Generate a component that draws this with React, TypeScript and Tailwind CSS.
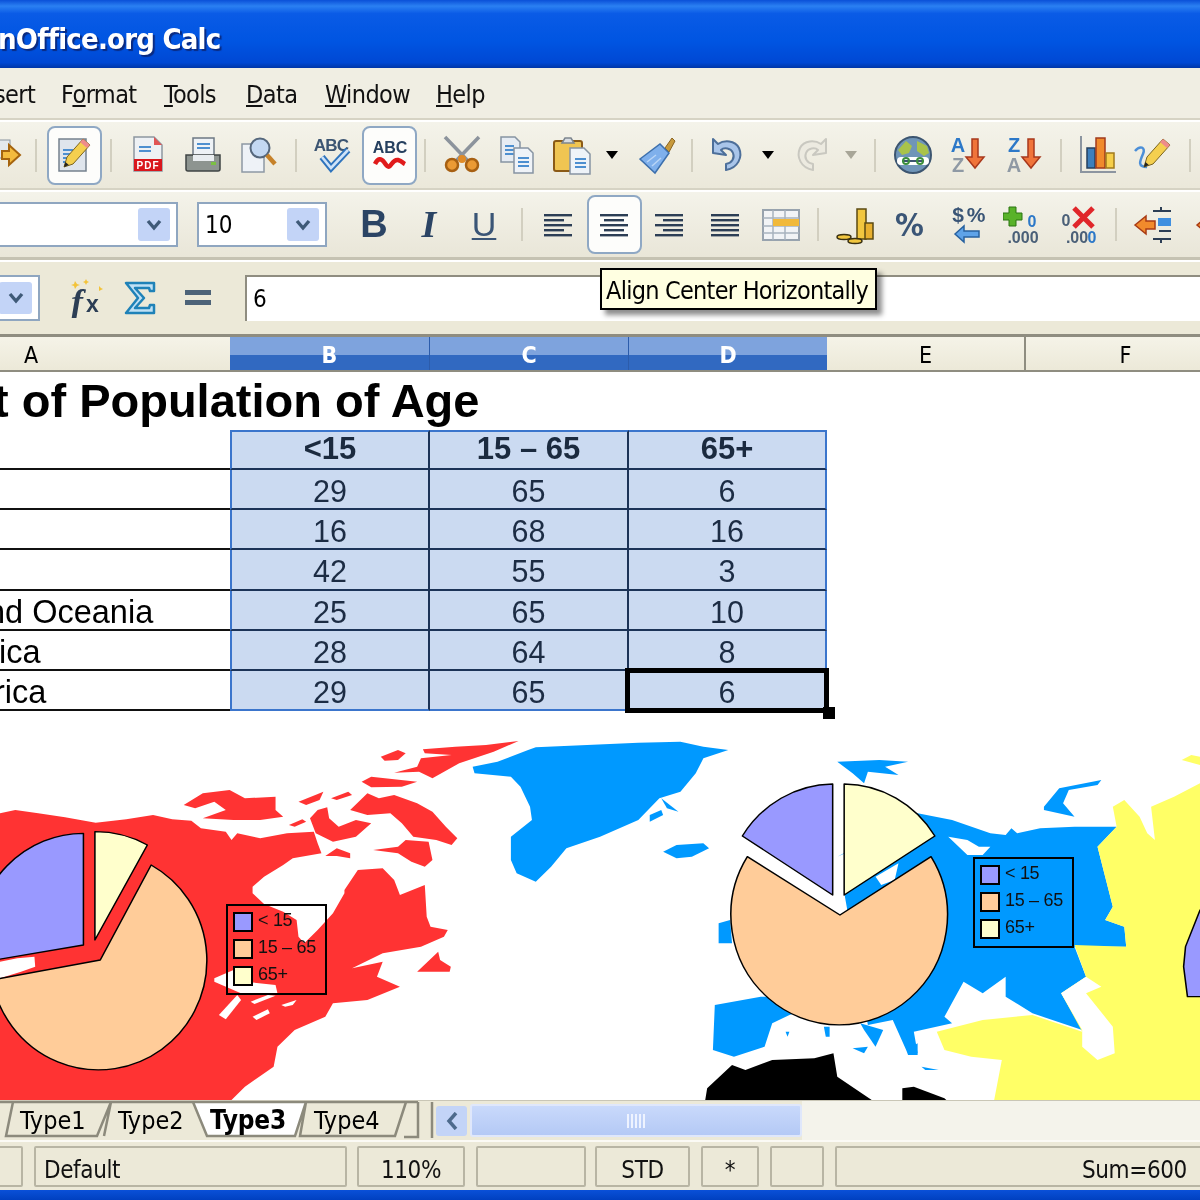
import type { ReactNode } from 'react'

const rows = [
  { label: '', b: '29', c: '65', d: '6' },
  { label: '', b: '16', c: '68', d: '16' },
  { label: '', b: '42', c: '55', d: '3' },
  { label: 'nd Oceania', b: '25', c: '65', d: '10', off: '-ml-[13px]' },
  { label: 'ica', b: '28', c: '64', d: '8', off: '-ml-[1px]' },
  { label: 'rica', b: '29', c: '65', d: '6', off: '-ml-[6px]' },
]

function Ico({ children }: { children: ReactNode }) {
  return (
    <svg viewBox="0 0 40 40" className="h-10 w-10 flex-none">
      {children}
    </svg>
  )
}

function Tool({ children, className = '' }: { children: ReactNode; className?: string }) {
  return <div className={`flex h-10 w-[55px] flex-none items-center justify-center ${className}`}>{children}</div>
}

function Active({ children, className = '' }: { children: ReactNode; className?: string }) {
  return (
    <div className={`flex h-[59px] w-[55px] flex-none items-center justify-center rounded-lg border-2 border-[#8fa8c4] bg-[#fdfdfb] ${className}`}>
      {children}
    </div>
  )
}

function Sep({ className = '' }: { className?: string }) {
  return <div className={`h-[33px] w-[2px] flex-none bg-[#d2cfc0] ${className}`} />
}

function Drop({ gray = false, className = '' }: { gray?: boolean; className?: string }) {
  return (
    <div className={`flex h-10 w-[26px] flex-none items-center justify-center ${className}`}>
      <svg viewBox="0 0 14 8" className="h-2 w-[14px]">
        <path d="M1 0h12L7 8z" fill={gray ? '#a8a698' : '#000'} />
      </svg>
    </div>
  )
}

function Chevron({ className }: { className: string }) {
  return (
    <div className={`flex flex-none items-center justify-center rounded-[3px] bg-[#c3d4f7] ${className}`}>
      <svg viewBox="0 0 16 12" className="h-3 w-4">
        <path d="M2 2l6 7 6-7" fill="none" stroke="#3f5a78" strokeWidth="3.4" />
      </svg>
    </div>
  )
}

function DocLines({ x, y, w, n = 3 }: { x: number; y: number; w: number; n?: number }) {
  return (
    <>
      {Array.from({ length: n }).map((_, i) => (
        <rect key={i} x={x} y={y + i * 4} width={w} height="2" fill="#4d8fd0" />
      ))}
    </>
  )
}

function AlignIcon({ kind }: { kind: 'left' | 'center' | 'right' | 'full' }) {
  const long = [0, 2, 4]
  const lines = [0, 1, 2, 3, 4].map(i => {
    const isLong = long.includes(i) || kind === 'full'
    const w = isLong ? 28 : 20
    const x = kind === 'left' ? 6 : kind === 'right' ? 34 - w : 20 - w / 2
    return <rect key={i} x={x} y={9 + i * 5} width={w} height="2.4" fill="#2c3e55" />
  })
  return <Ico>{lines}</Ico>
}

function Pencil({ tx = 0, ty = 0 }: { tx?: number; ty?: number }) {
  return (
    <g transform={`translate(${tx} ${ty})`}>
      <path d="M28 4l7 6-17 19-9 3 3-10z" fill="#f4cf4f" stroke="#7a6420" strokeWidth="1" />
      <path d="M28 4l7 6-3 3-7-6z" fill="#ee8b8b" />
      <path d="M9 32l1.4-5 3.4 3z" fill="#222" />
    </g>
  )
}

function Legend({ className }: { className: string }) {
  const items = [
    { t: '< 15', bg: 'bg-[#9999ff]' },
    { t: '15 – 65', bg: 'bg-[#ffcc99]' },
    { t: '65+', bg: 'bg-[#ffffcc]' },
  ]
  return (
    <div className={`absolute flex h-[91px] w-[101px] flex-col justify-center gap-[7px] border-2 border-black pl-[5px] ${className}`}>
      {items.map(it => (
        <div key={it.t} className="flex h-[20px] items-center gap-[5px] font-['Liberation_Sans',sans-serif] text-[18px] tracking-[-0.3px] text-[#111]">
          <span className={`h-[20px] w-[20px] flex-none border-2 border-black ${it.bg}`} />
          <span className="-mt-1 whitespace-nowrap">{it.t}</span>
        </div>
      ))}
    </div>
  )
}

function MapArt() {
  const red = '#ff3333'
  const blue = '#0099ff'
  const yellow = '#ffff66'
  const ink = { stroke: '#000', strokeWidth: 4, strokeLinejoin: 'round' as const }
  return (
    <svg viewBox="0 740 1200 360" className="block h-[360px] w-[1200px]">
      <g transform="translate(0 730) scale(0.3827 0.3333)">
        <polygon fill={red} points="0,250 40,240 100,250 170,262 250,278 330,268 400,255 450,268 500,272 525,295 590,305 605,330 620,310 680,325 750,310 820,305 830,340 840,370 765,385 740,405 690,440 660,470 660,490 690,522 740,545 775,570 780,620 795,640 830,600 870,550 900,490 900,480 935,420 1000,415 1030,450 1045,495 1110,465 1115,560 1125,590 1170,600 1160,620 1100,650 1000,670 920,715 1000,695 985,740 1045,770 960,810 870,820 850,860 770,900 725,950 715,1010 640,1070 605,1110 0,1110" />
        <polygon fill={red} points="480,225 530,190 600,180 640,205 720,200 720,240 740,260 680,270 610,270 530,265 590,240 560,215 510,235" />
        <polygon fill={red} points="780,215 845,185 835,210 800,225" />
        <polygon fill={red} points="865,205 910,185 920,195 880,210" />
        <polygon fill={red} points="755,285 790,268 800,275 770,290" />
        <polygon fill={red} points="915,240 960,190 990,205 1030,195 1090,220 1130,245 1165,290 1195,325 1180,345 1140,330 1080,320 1050,280 1020,250 960,255" />
        <polygon fill={red} points="975,360 1040,350 1060,330 1120,335 1130,390 1110,410 1075,395 1040,370" />
        <polygon fill={red} points="850,378 880,355 915,370 915,385 880,378" />
        <polygon fill={red} points="1105,58 1190,50 1270,45 1355,33 1290,65 1200,100 1130,145 1095,125 1030,128 1090,110 1100,85 1180,75 1110,70" />
        <polygon fill={red} points="995,80 1040,60 1060,70 1040,90 1005,92" />
        <polygon fill={red} points="945,155 970,140 1090,155 1050,170 970,172" />
        <polygon fill={red} points="830,240 855,232 860,265 885,290 930,270 970,280 930,320 870,335 825,310 810,265" />
        <polygon fill={red} points="1090,725 1145,665 1150,690 1178,710 1175,725" />
        <polygon fill="#fff" points="560,745 610,720 640,755 720,765 725,790 640,795 560,755" />
        <polygon fill="#fff" points="572,855 620,795 630,810 590,868" />
        <polygon fill="#fff" points="660,860 700,838 705,850 670,870" />
        <polygon fill="#fff" points="655,815 700,795 720,797 665,822" />
        <polygon fill="#fff" points="735,825 775,810 765,825 745,830" />
        <polygon fill={blue} points="1235,110 1300,95 1380,60 1400,52 1668,38 1778,35 1838,50 1903,60 1838,85 1818,130 1778,185 1723,205 1668,270 1568,320 1480,355 1440,410 1400,455 1350,430 1335,390 1335,320 1390,270 1385,230 1360,170 1335,140 1240,130" />
        <polygon fill="#fff" points="0,695 45,685 90,680 92,710 55,725 0,745" />
        <path d="M262,690 L395,405 A283 328 0 1 1 -21,750 Z" fill="#ffcc99" {...ink} />
        <path d="M218,645 L218,310 A283 335 0 0 0 -65,645 L-40,695 Z" fill="#9999ff" {...ink} />
        <path d="M248,630 L248,305 A283 325 0 0 1 385,345 Z" fill="#ffffcc" {...ink} />
      </g>
      <g transform="translate(600 730) scale(0.3827 0.3333)">
        <polygon fill={blue} points="620,95 730,90 805,95 745,110 780,135 700,125 690,160 660,130" />
        <polygon fill={blue} points="165,365 200,345 270,340 285,355 240,380 200,385" />
        <polygon fill={blue} points="130,255 160,240 165,255 130,275" />
        <polygon fill={blue} points="160,205 205,245 175,235" />
        <polygon fill={blue} points="1160,230 1200,175 1310,150 1300,165 1225,180 1210,220 1240,260 1160,240" />
        <polygon fill={blue} points="620,380 830,250 920,270 1020,310 1060,315 1075,295 1090,310 1150,295 1240,290 1350,290 1300,350 1320,440 1340,530 1320,570 1370,590 1375,650 1240,650 1270,740 1205,790 1260,900 1130,850 1060,800 1060,740 1000,790 950,755 900,860 920,880 820,905 830,970 800,960 765,870 700,885 640,500 640,370" />
        <polygon fill={blue} points="420,800 300,825 295,960 350,980 430,950 450,880 495,855 640,800" />
        <polygon fill={blue} points="310,580 340,570 345,640 310,640" />
        <polygon fill="#fff" points="910,320 960,330 990,350 1020,350 1000,375 960,375" />
        <polygon fill="#fff" points="720,440 780,400 770,450 735,465" />
        <polygon fill="#fff" points="590,500 640,500 640,550 600,530" />
        <polygon fill={blue} points="680,880 740,900 720,950 690,900" />
        <polygon fill={blue} points="585,890 600,890 600,920 590,920" />
        <polygon fill={blue} points="660,955 700,950 690,970" />
        <polygon fill={blue} points="485,905 495,905 490,920" />
        <polygon fill={blue} points="840,1010 885,1020 850,1020" />
        <polygon fill={blue} points="800,960 830,940 830,975 805,975" />
        <polygon fill={yellow} points="1340,230 1370,210 1410,260 1430,310 1450,330 1440,230 1500,200 1568,160 1568,1110 1030,1110 1050,990 970,980 900,960 880,905 1000,870 1130,855 1260,905 1205,790 1270,740 1240,645 1375,650 1370,590 1320,570 1340,530 1300,350 1350,290" />
        <polygon fill={yellow} points="1520,90 1545,75 1568,80 1568,105" />
        <polygon fill="#fff" points="1270,740 1310,770 1270,790 1340,890 1345,970 1300,990 1260,950 1260,900 1205,790" />
        <polygon fill="#fff" points="990,1020 1020,1005 1010,1025" />
        <polygon fill="#000" points="275,1110 280,1075 345,1005 380,1020 450,990 560,985 610,970 620,1040 710,1110" />
        <polygon fill="#000" points="790,1075 820,1070 900,1105 905,1110 790,1110" />
        <path d="M627,555 L385,380 A283 330 0 1 0 865,380 Z" fill="#ffcc99" {...ink} />
        <path d="M608,495 L372,318 A283 333 0 0 1 608,162 Z" fill="#9999ff" {...ink} />
        <path d="M638,495 L638,162 A283 333 0 0 1 875,318 Z" fill="#ffffcc" {...ink} />
        <path d="M1568,540 L1530,650 L1525,710 L1535,800 L1600,800 L1600,540 Z" fill="#9999ff" {...ink} />
      </g>
    </svg>
  )
}

function TabStrip() {
  const line = { stroke: '#8c8a7c', strokeWidth: 2.5, fill: 'none' }
  return (
    <div className="relative flex h-[40px] w-[436px] flex-none items-center">
      <svg viewBox="0 0 436 40" className="absolute inset-0 h-[40px] w-[436px]">
        <path d="M193 1h113l-11 34h-88z" fill="#fff" />
        <path d="M0 1h418" {...line} />
        <path d="M13 1L6 35h91l14-34M111 1L104 35M193 1l14 34h88l11-34M306 1L300 35h95l11-34M418 1v35h-14M432 1v36" {...line} />
      </svg>
      <span className="relative ml-[20px] w-[98px] flex-none">Type1</span>
      <span className="relative w-[92px] flex-none">Type2</span>
      <span className="relative w-[104px] flex-none text-[26px] font-bold tracking-[-0.2px]">Type3</span>
      <span className="relative flex-none">Type4</span>
    </div>
  )
}

function StatusCell({ className, children }: { className: string; children?: ReactNode }) {
  return (
    <div className={`flex h-[41px] flex-none items-center rounded-[2px] border-2 border-[#b8b5a4] bg-[#ece9d8] pt-[8px] ${className}`}>
      {children}
    </div>
  )
}

export default function App() {
  return (
    <div className="relative flex h-[1200px] w-[1200px] flex-col overflow-hidden bg-white font-['DejaVu_Sans_Condensed','DejaVu_Sans',sans-serif] text-black blur-[0.5px]">
      {/* title bar */}
      <div className="flex h-[68px] flex-none items-end bg-[linear-gradient(#0a50d8_0%,#2b80f2_9%,#0a5be6_20%,#0055e2_60%,#0048d4_92%,#0036a8_100%)] pb-[10px]">
        <span className="-ml-[2px] whitespace-nowrap text-[29px] leading-[38px] font-bold tracking-[-0.8px] text-white [text-shadow:2px_2px_1px_#0a2a80]">nOffice.org Calc</span>
      </div>

      {/* menu */}
      <div className="flex h-[52px] flex-none items-center border-b-2 border-[#d6d3c4] bg-[#f0eee3] pt-1 text-[25px] tracking-[-0.6px] text-[#111]">
        <span className="-ml-[6px] w-[67px] flex-none">sert</span>
        <span className="w-[103px] flex-none">F<span className="underline">o</span>rmat</span>
        <span className="w-[82px] flex-none"><span className="underline">T</span>ools</span>
        <span className="w-[79px] flex-none"><span className="underline">D</span>ata</span>
        <span className="w-[111px] flex-none"><span className="underline">W</span>indow</span>
        <span className="flex-none"><span className="underline">H</span>elp</span>
      </div>

      {/* standard toolbar */}
      <div className="-ml-[22px] flex h-[70px] w-[1222px] flex-none items-center border-t-2 border-b-2 border-t-white border-b-[#d6d3c4] bg-[linear-gradient(#f4f3ea,#ebe8da)]">
        <Tool>
          <Ico>
            <rect x="12" y="5" width="12" height="18" fill="#e4e8ee" stroke="#8a94a0" />
            <path d="M16 16h7v-6l11 10-11 10v-6h-7z" fill="#f4bb3e" stroke="#a5640f" strokeWidth="2" />
          </Ico>
        </Tool>
        <Sep className="ml-[2px]" />
        <Active className="ml-[10px]">
          <Ico>
            <rect x="4" y="4" width="27" height="32" fill="#dfe5ec" stroke="#75818e" strokeWidth="1.5" />
            <DocLines x={8} y={14} w={10} n={4} />
            <Pencil />
          </Ico>
        </Active>
        <Sep className="ml-[8px]" />
        <Tool className="ml-[8.5px]">
          <Ico>
            <path d="M6 2h20l8 8v26H6z" fill="#eef1f4" stroke="#8d96a0" strokeWidth="1.5" />
            <path d="M26 2l8 8h-8z" fill="#e25555" />
            <DocLines x={11} y={11} w={12} n={2} />
            <rect x="6" y="24" width="28" height="12" fill="#d9161c" />
            <text x="20" y="34" textAnchor="middle" fontSize="10" fontWeight="700" letterSpacing="1" fill="#fff" fontFamily="Liberation Sans">PDF</text>
          </Ico>
        </Tool>
        <Tool>
          <Ico>
            <rect x="10" y="3" width="21" height="23" fill="#eef2f6" stroke="#6d7884" strokeWidth="1.5" />
            <DocLines x={14} y={8} w={13} n={2} />
            <path d="M3 20h34v14a2 2 0 01-2 2H5a2 2 0 01-2-2z" fill="#8d9490" stroke="#3f4444" strokeWidth="1.5" />
            <rect x="10" y="20" width="21" height="6" fill="#e9edf0" />
            <rect x="28" y="27" width="5" height="3" fill="#7bc043" />
          </Ico>
        </Tool>
        <Tool>
          <Ico>
            <rect x="4" y="9" width="22" height="28" fill="#eef2f7" stroke="#8d98a4" strokeWidth="1.5" />
            <circle cx="22" cy="13" r="9.5" fill="#c3d8f2" stroke="#55677c" strokeWidth="2" />
            <path d="M29 20l8 9" stroke="#c6822a" strokeWidth="4.5" />
          </Ico>
        </Tool>
        <Sep className="ml-[9.5px]" />
        <Tool className="ml-[7.5px]">
          <Ico>
            <text x="19" y="16" textAnchor="middle" fontSize="17" fontWeight="700" fill="#3c5572" fontFamily="Liberation Sans" letterSpacing="-0.8">ABC</text>
            <path d="M10 22l9 11 17-18" fill="none" stroke="#2f74bd" strokeWidth="6.5" />
            <path d="M10 22l9 11 17-18" fill="none" stroke="#cfe3f8" strokeWidth="2.6" />
          </Ico>
        </Tool>
        <Active className="ml-[2.5px]">
          <Ico>
            <text x="20" y="18" textAnchor="middle" fontSize="16" fontWeight="700" fill="#26405f" fontFamily="Liberation Sans">ABC</text>
            <path d="M5 29c3-6 6-6 9-2 2 3 4 6 6 4s4-7 8-6 5 3 7 4" fill="none" stroke="#e01b1b" strokeWidth="4.5" />
          </Ico>
        </Active>
        <Sep className="ml-[7px]" />
        <Tool className="ml-[8px]">
          <Ico>
            <path d="M3 2l24 25M37 2L13 27" stroke="#8c939c" strokeWidth="3.5" />
            <circle cx="10" cy="30" r="6" fill="#eb9a34" stroke="#a76012" strokeWidth="2.5" />
            <circle cx="30" cy="30" r="6" fill="#eb9a34" stroke="#a76012" strokeWidth="2.5" />
            <circle cx="20" cy="24" r="4" fill="#e08b27" />
          </Ico>
        </Tool>
        <Tool>
          <Ico>
            <path d="M4 2h14l5 5v20H4z" fill="#e6ecf3" stroke="#8794a2" strokeWidth="1.5" />
            <DocLines x={8} y={10} w={9} n={3} />
            <path d="M17 13h14l5 5v20H17z" fill="#eff3f8" stroke="#8794a2" strokeWidth="1.5" />
            <DocLines x={21} y={22} w={11} n={3} />
          </Ico>
        </Tool>
        <Tool>
          <Ico>
            <rect x="2" y="6" width="28" height="30" rx="2" fill="#f0c552" stroke="#8b5a16" strokeWidth="2" />
            <path d="M10 8l3-5h6l3 5z" fill="#d8dde2" stroke="#7c858e" strokeWidth="1.5" />
            <path d="M18 13h14l6 6v20H18z" fill="#eef3f8" stroke="#8794a2" strokeWidth="1.5" />
            <DocLines x={23} y={23} w={11} n={3} />
          </Ico>
        </Tool>
        <Drop />
        <Tool className="ml-[4px]">
          <Ico>
            <path d="M28 13l7-10 3 3-6 11z" fill="#c89a3c" stroke="#8a6420" />
            <path d="M3 24L23 9l9 9-14 20z" fill="#7fb0ec" stroke="#3d70ad" strokeWidth="1.5" />
            <path d="M10 27l9-7M15 31l9-8" stroke="#b9d5f6" strokeWidth="1.5" />
          </Ico>
        </Tool>
        <Sep className="ml-[7px]" />
        <Tool className="ml-[7px]">
          <Ico>
            <path d="M5 18V4l5 5c6-4 17-4 21 4 4 9-1 20-13 22v-6c6-1 9-6 7-11-2-5-9-6-12-3l5 5z" fill="#a9c5ea" stroke="#4d6f9a" strokeWidth="2" strokeLinejoin="round" />
          </Ico>
        </Tool>
        <Drop />
        <Tool className="ml-[2px]">
          <Ico>
            <path d="M35 18V4l-5 5C24 5 13 5 9 13c-4 9 1 20 13 22v-6c-6-1-9-6-7-11 2-5 9-6 12-3l-5 5z" fill="#eceae0" stroke="#c9c8c0" strokeWidth="2" strokeLinejoin="round" />
          </Ico>
        </Tool>
        <Drop gray />
        <Sep className="ml-[10px]" />
        <Tool className="ml-[9px]">
          <Ico>
            <ellipse cx="20" cy="20" rx="18" ry="18" fill="#6f95b8" stroke="#3c5570" strokeWidth="2" />
            <path d="M5 15l8-9 6 5-3 7-7 2zM24 6l10 5 2 7-5 3-7-5z" fill="#a9c34a" />
            <path d="M8 26h24" stroke="#fff" strokeWidth="8" strokeLinecap="round" />
            <path d="M9 26h22" stroke="#3c5570" strokeWidth="2" />
            <circle cx="13" cy="26" r="3" fill="none" stroke="#3c8f3c" strokeWidth="2" />
            <circle cx="27" cy="26" r="3" fill="none" stroke="#3c8f3c" strokeWidth="2" />
          </Ico>
        </Tool>
        <Tool>
          <Ico>
            <text x="10" y="17" textAnchor="middle" fontSize="20" fontWeight="700" fill="#2c78c8" fontFamily="Liberation Sans">A</text>
            <text x="10" y="37" textAnchor="middle" fontSize="20" fontWeight="700" fill="#8f99a4" fontFamily="Liberation Sans">Z</text>
            <path d="M24 4h6v18h6l-9 11-9-11h6z" fill="#f0743a" stroke="#a8381c" strokeWidth="1.5" />
          </Ico>
        </Tool>
        <Tool className="ml-[1px]">
          <Ico>
            <text x="10" y="17" textAnchor="middle" fontSize="20" fontWeight="700" fill="#2c78c8" fontFamily="Liberation Sans">Z</text>
            <text x="10" y="37" textAnchor="middle" fontSize="20" fontWeight="700" fill="#8f99a4" fontFamily="Liberation Sans">A</text>
            <path d="M24 4h6v18h6l-9 11-9-11h6z" fill="#f0743a" stroke="#a8381c" strokeWidth="1.5" />
          </Ico>
        </Tool>
        <Sep className="ml-[9px]" />
        <Tool className="ml-[8px]">
          <Ico>
            <path d="M3 1v36h35" fill="none" stroke="#8c95a0" strokeWidth="2" />
            <rect x="9" y="13" width="8" height="20" fill="#3d7fbc" stroke="#26405f" strokeWidth="1.5" />
            <rect x="18" y="3" width="9" height="30" fill="#f08a2c" stroke="#a13a1c" strokeWidth="1.5" />
            <rect x="28" y="18" width="8" height="15" fill="#f6cf4a" stroke="#a07a1c" strokeWidth="1.5" />
          </Ico>
        </Tool>
        <Tool>
          <Ico>
            <path d="M2 16c5-6 11-4 8 3s-6 13 4 13" fill="none" stroke="#4c8fd8" strokeWidth="2.5" />
            <Pencil tx={2} ty={0} />
          </Ico>
        </Tool>
        <Sep className="ml-[9px]" />
      </div>

      {/* formatting toolbar */}
      <div className="flex h-[70px] flex-none items-center border-t-2 border-b-[3px] border-t-white border-b-[#c5c2b2] bg-[linear-gradient(#f4f3ea,#e9e6d8)]">
        <div className="-ml-[10px] flex h-[45px] w-[188px] flex-none items-center justify-end border-2 border-[#8fa6c0] bg-white pr-[6px]">
          <Chevron className="h-[33px] w-[32px]" />
        </div>
        <div className="ml-[19px] flex h-[45px] w-[130px] flex-none items-center justify-between border-2 border-[#8fa6c0] bg-white pr-[6px] pl-[6px] text-[24px]">
          <span>10</span>
          <Chevron className="h-[33px] w-[32px]" />
        </div>
        <Tool className="ml-[19.5px] font-['Liberation_Sans',sans-serif] text-[38px] font-bold text-[#2b4464]">B</Tool>
        <Tool className="font-['Liberation_Serif',serif] text-[38px] font-bold italic text-[#2b4464]">I</Tool>
        <Tool className="font-['Liberation_Sans',sans-serif] text-[34px] text-[#3a5576] underline decoration-2 underline-offset-2">U</Tool>
        <Sep className="ml-[9px]" />
        <Tool className="ml-[8px]"><AlignIcon kind="left" /></Tool>
        <Active className="ml-[1px]"><AlignIcon kind="center" /></Active>
        <Tool><AlignIcon kind="right" /></Tool>
        <Tool className="ml-[1px]"><AlignIcon kind="full" /></Tool>
        <Tool className="ml-[1px]">
          <Ico>
            <rect x="2" y="5" width="36" height="30" fill="#f2f4f6" stroke="#98a3ae" strokeWidth="2" />
            <path d="M2 13h36M2 21h36M2 28h36M12 5v30M24 5v30" stroke="#a8b3be" strokeWidth="1.5" />
            <rect x="12" y="14" width="26" height="7" fill="#f1b93a" />
          </Ico>
        </Tool>
        <Sep className="ml-[8px]" />
        <Tool className="ml-[8.5px]">
          <Ico>
            <rect x="22" y="4" width="9" height="30" fill="#f1c63f" stroke="#5b4a12" strokeWidth="1.5" />
            <rect x="30" y="18" width="8" height="16" fill="#e8b02f" stroke="#5b4a12" strokeWidth="1.5" />
            <ellipse cx="9" cy="32" rx="7" ry="2.5" fill="#f1c63f" stroke="#3a3010" strokeWidth="1.5" />
            <ellipse cx="20" cy="36" rx="7" ry="2.5" fill="#f1c63f" stroke="#3a3010" strokeWidth="1.5" />
          </Ico>
        </Tool>
        <Tool className="text-[32px] font-bold text-[#3a5576]">%</Tool>
        <Tool className="ml-[2px]">
          <Ico>
            <text x="11" y="17" textAnchor="middle" fontSize="21" fontWeight="700" fill="#3a5576" fontFamily="Liberation Sans">$</text>
            <text x="29" y="17" textAnchor="middle" fontSize="21" fontWeight="700" fill="#3a5576" fontFamily="Liberation Sans">%</text>
            <path d="M8 29l9-8v5h15v6H17v5z" fill="#5ea3e8" stroke="#27619f" strokeWidth="1.5" />
          </Ico>
        </Tool>
        <Tool className="ml-[1px]">
          <Ico>
            <path d="M6 2h7v6h6v7h-6v6H6v-6H0V8h6z" fill="#59b229" stroke="#2b7510" strokeWidth="1" />
            <text x="29" y="22" textAnchor="middle" fontSize="16" fontWeight="700" fill="#2c78c8" fontFamily="Liberation Sans">0</text>
            <text x="20" y="38" textAnchor="middle" fontSize="16" fontWeight="700" fill="#4b6078" fontFamily="Liberation Sans">.000</text>
          </Ico>
        </Tool>
        <Tool className="ml-[1px]">
          <Ico>
            <text x="7" y="21" textAnchor="middle" fontSize="16" fontWeight="700" fill="#4b6078" fontFamily="Liberation Sans">0</text>
            <text x="18" y="38" textAnchor="middle" fontSize="16" fontWeight="700" fill="#4b6078" fontFamily="Liberation Sans">.00</text>
            <text x="33" y="38" textAnchor="middle" fontSize="16" fontWeight="700" fill="#2c78c8" fontFamily="Liberation Sans">0</text>
            <path d="M15 3l19 19M34 3L15 22" stroke="#e0262a" strokeWidth="5" />
          </Ico>
        </Tool>
        <Sep className="ml-[9px]" />
        <Tool className="ml-[8.5px]">
          <Ico>
            <path d="M2 20l11-9v5h9v8h-9v5z" fill="#f18a2c" stroke="#a83a14" strokeWidth="1.5" />
            <path d="M20 6h18M26 14h12M26 20h12M26 26h12M20 34h18M28 2v4M28 34v4" stroke="#2c3e55" strokeWidth="2" />
            <rect x="25" y="13" width="13" height="8" fill="#3f8fe0" />
          </Ico>
        </Tool>
        <Tool>
          <Ico>
            <path d="M9 20l11-9v5h9v8h-9v5z" fill="#f18a2c" stroke="#a83a14" strokeWidth="1.5" />
          </Ico>
        </Tool>
      </div>

      {/* formula bar */}
      <div className="flex h-[77px] flex-none items-center border-t-2 border-b-[3px] border-t-white border-b-[#8f8d80] bg-[#ece9d8]">
        <div className="-ml-[10px] flex h-[46px] w-[50px] flex-none items-center justify-end border-2 border-[#8fa6c0] bg-white pr-[6px]">
          <Chevron className="h-[32px] w-[33px]" />
        </div>
        <Tool className="ml-[17px]">
          <Ico>
            <path d="M10 3l2 3 3 1-3 1-2 3-1-3-3-1 3-1zM21 1l1 2 2 1-2 1-1 2-1-2-2-1 2-1zM34 8l2 2 2 1-4 2z" fill="#f3c33a" />
            <text x="6" y="36" fontSize="36" fontStyle="italic" fontWeight="700" fill="#2c3e55" fontFamily="Liberation Serif">f</text>
            <text x="21" y="34" fontSize="23" fontWeight="700" fill="#2c3e55" fontFamily="Liberation Sans">x</text>
          </Ico>
        </Tool>
        <Tool>
          <Ico>
            <path d="M6 5h28v8h-4l-1-3H15l9 10-9 10h14l1-3h4v8H6l12-15z" fill="#bfe0f5" stroke="#1f82b8" strokeWidth="2.5" strokeLinejoin="round" />
          </Ico>
        </Tool>
        <Tool className="ml-[3px]">
          <Ico>
            <rect x="7" y="12" width="26" height="5" fill="#4d6378" />
            <rect x="7" y="22" width="26" height="5" fill="#4d6378" />
          </Ico>
        </Tool>
        <div className="ml-[20px] flex h-[46px] flex-1 items-center border-t-2 border-l-2 border-t-[#8f8d80] border-l-[#8f8d80] bg-white pl-[6px] text-[24px]">6</div>
      </div>

      {/* column headers */}
      <div className="flex h-[35px] flex-none border-b-2 border-[#8f8d80] text-[23px] leading-[36px]">
        <div className="w-[230px] flex-none bg-[linear-gradient(#f5f3e8,#ece9d8)] pl-[24px]">A</div>
        <div className="w-[200px] flex-none border-r border-[#2c5cab] bg-[linear-gradient(#7ea3dd_0_55%,#3169c1_55%)] text-center font-bold text-white">B</div>
        <div className="w-[199px] flex-none border-r border-[#2c5cab] bg-[linear-gradient(#7ea3dd_0_55%,#3169c1_55%)] text-center font-bold text-white">C</div>
        <div className="w-[198px] flex-none bg-[linear-gradient(#7ea3dd_0_55%,#3169c1_55%)] text-center font-bold text-white">D</div>
        <div className="w-[199px] flex-none border-r-2 border-[#8f8d80] bg-[linear-gradient(#f5f3e8,#ece9d8)] text-center">E</div>
        <div className="w-[199px] flex-none bg-[linear-gradient(#f5f3e8,#ece9d8)] text-center">F</div>
      </div>

      {/* sheet */}
      <div className="relative h-[728px] flex-none overflow-hidden bg-white font-['Liberation_Sans',sans-serif]">
        <div className="flex h-[58px] items-end">
          <span className="-ml-[7px] text-[47px] leading-[58px] font-bold whitespace-nowrap">t of Population of Age</span>
        </div>
        <div className="flex h-[40px] text-[31px] leading-[34px] font-bold text-[#1b2a3f]">
          <div className="w-[230px] flex-none border-b-2 border-[#111]" />
          <div className="w-[200px] flex-none border-t-2 border-r-2 border-b-2 border-l-2 border-t-[#3b75cc] border-r-[#1c3357] border-b-[#1c3357] border-l-[#3b75cc] bg-[#cbdaf1] text-center">&lt;15</div>
          <div className="w-[199px] flex-none border-t-2 border-r-2 border-b-2 border-t-[#3b75cc] border-r-[#1c3357] border-b-[#1c3357] bg-[#cbdaf1] text-center">15 – 65</div>
          <div className="w-[198px] flex-none border-t-2 border-r-2 border-b-2 border-t-[#3b75cc] border-r-[#3b75cc] border-b-[#1c3357] bg-[#cbdaf1] text-center">65+</div>
        </div>
        {rows.map((r, i) => {
          const last = i === rows.length - 1
          return (
            <div key={i} className="flex h-[40.2px] text-[30.5px] leading-[42px]">
              <div className="w-[230px] flex-none overflow-hidden border-b-2 border-[#111] text-[32.5px] whitespace-nowrap">
                {r.label && <span className={`block ${r.off}`}>{r.label}</span>}
              </div>
              <div className={`w-[200px] flex-none border-r-2 border-b-2 border-l-2 border-r-[#1c3357] border-l-[#3b75cc] bg-[#cbdaf1] text-center text-[#1c2c44] ${last ? 'border-b-[#3b75cc]' : 'border-b-[#1c3357]'}`}>{r.b}</div>
              <div className={`w-[199px] flex-none border-r-2 border-b-2 border-r-[#1c3357] bg-[#cbdaf1] text-center text-[#1c2c44] ${last ? 'border-b-[#3b75cc]' : 'border-b-[#1c3357]'}`}>{r.c}</div>
              <div className="relative w-[198px] flex-none border-r-2 border-b-2 border-r-[#3b75cc] border-b-[#1c3357] bg-[#cbdaf1] text-center text-[#1c2c44]">
                {r.d}
                {last && (
                  <>
                    <div className="absolute -top-[3px] -right-[4px] -bottom-[4px] -left-[4px] border-[5px] border-black" />
                    <div className="absolute -right-[10px] -bottom-[10px] h-[12px] w-[12px] bg-black" />
                  </>
                )}
              </div>
            </div>
          )
        })}
        <div className="relative mt-[28.8px]">
          <MapArt />
          <Legend className="top-[164px] left-[226px]" />
          <Legend className="top-[117px] left-[973px]" />
        </div>
      </div>

      {/* sheet tabs */}
      <div className="flex h-[40px] flex-none items-center border-t border-[#c9c6b6] bg-[#ece9d8] text-[25px]">
        <TabStrip />
        <div className="flex h-[30px] w-[31px] flex-none items-center justify-center rounded-[3px] bg-[#c3d4f7]">
          <svg viewBox="0 0 12 18" className="h-[18px] w-3">
            <path d="M10 1L3 9l7 8" fill="none" stroke="#4d6a8c" strokeWidth="3.5" />
          </svg>
        </div>
        <div className="ml-[3px] flex h-[33px] w-[332px] flex-none items-center justify-center rounded-[3px] border-2 border-[#dfe7fb] bg-[linear-gradient(#c9d9fb,#b4c9f5)]">
          <svg viewBox="0 0 18 14" className="h-[14px] w-[18px]">
            <path d="M1 0v14M5 0v14M9 0v14M13 0v14M17 0v14" stroke="#eef3ff" strokeWidth="2" />
          </svg>
        </div>
        <div className="h-full flex-1 bg-[#f4f3eb]" />
      </div>

      {/* status bar */}
      <div className="flex h-[50px] flex-none items-center border-t-2 border-[#fbfaf5] bg-[#ece9d8] text-[24px] tracking-[-0.4px] text-[#111]">
        <StatusCell className="-ml-[10px] w-[33px]" />
        <StatusCell className="ml-[11px] w-[313px] pl-[8px]">Default</StatusCell>
        <StatusCell className="ml-[10px] w-[108px] justify-center">110%</StatusCell>
        <StatusCell className="ml-[11px] w-[110px]" />
        <StatusCell className="ml-[9px] w-[95px] justify-center">STD</StatusCell>
        <StatusCell className="ml-[11px] w-[58px] justify-center">*</StatusCell>
        <StatusCell className="ml-[11px] w-[54px]" />
        <StatusCell className="ml-[11px] w-[380px] pl-[245px]">Sum=600</StatusCell>
      </div>
      <div className="h-[10px] flex-none bg-[linear-gradient(#0a50d8,#0040c0)]" />

      {/* tooltip */}
      <div className="absolute top-[268px] left-[600px] flex h-[42px] w-[277px] items-center border-2 border-black bg-[#ffffe1] pt-[3px] pl-[4px] text-[25px] tracking-[-0.75px] whitespace-nowrap shadow-[5px_5px_5px_rgba(0,0,0,0.45)]">
        Align Center Horizontally
      </div>
    </div>
  )
}
